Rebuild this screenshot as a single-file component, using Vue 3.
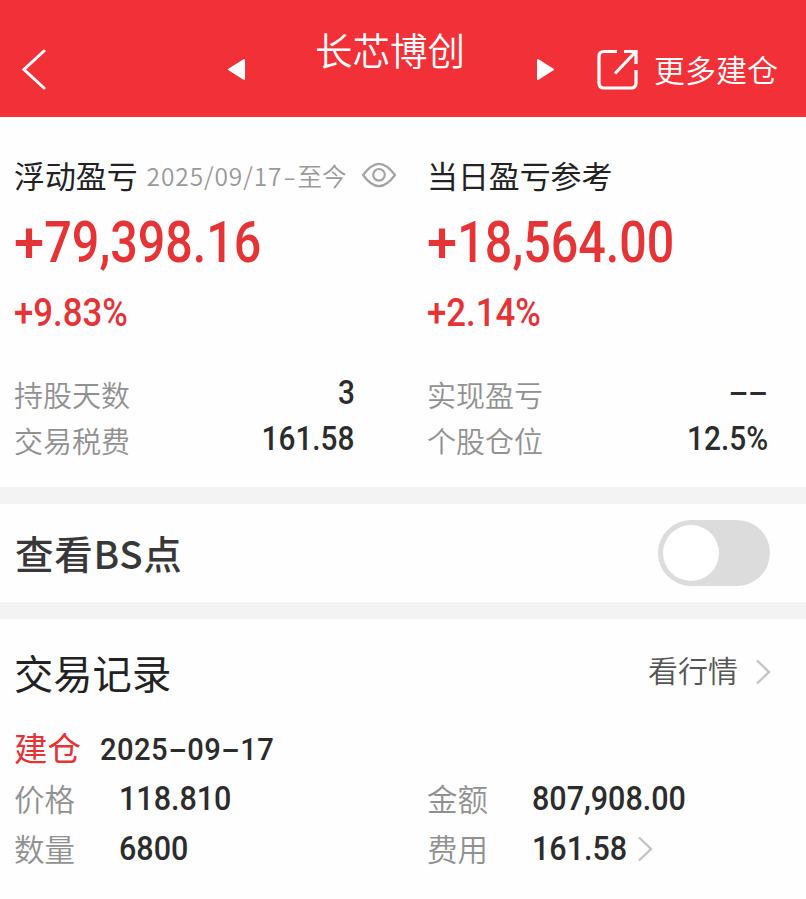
<template>
  <div class="page">
    <header class="header">
      <svg class="back" viewBox="0 0 26 42" width="26" height="42">
        <path d="M23 2 L3 20.5 L23 39" />
      </svg>
      <svg class="prev" viewBox="0 0 20 24" width="20" height="24">
        <path d="M2 11.5 L17 2 V21 Z" />
      </svg>
      <h1 class="title">{{ stockName }}</h1>
      <svg class="next" viewBox="0 0 20 24" width="20" height="24">
        <path d="M18 11.5 L3 2 V21 Z" />
      </svg>
      <a class="more">
        <svg viewBox="0 0 44 44" width="44" height="44">
          <path d="M22 3.5 H9 Q4 3.5 4 8.5 V35 Q4 40 9 40 H36 Q41 40 41 35 V22" />
          <path d="M29 3.5 H41 V16 M40.5 4 L20 25.5" />
        </svg>
        <span>更多建仓</span>
      </a>
    </header>

    <section class="summary">
      <div v-for="item in summary" :key="item.label" class="summary-col">
        <div class="summary-head">
          <span class="summary-label">{{ item.label }}</span>
          <span v-if="item.period" class="period"><b>{{ item.period }}</b><i>-</i>至今</span>
          <svg v-if="item.period" class="eye" viewBox="0 0 36 26" width="36" height="26">
            <path d="M2 13 C8 5 13 1.8 18 1.8 C23 1.8 28 5 34 13 C28 21 23 24.2 18 24.2 C13 24.2 8 21 2 13 Z" />
            <circle cx="18" cy="12.8" r="5.8" />
          </svg>
        </div>
        <div class="amount"><span><b>+</b>{{ item.amount }}</span></div>
        <div class="percent"><span>{{ item.percent }}</span></div>
        <div v-for="stat in item.stats" :key="stat.label" class="stat">
          <span class="stat-label">{{ stat.label }}</span>
          <span v-if="stat.value" class="num stat-value">{{ stat.value }}</span>
          <span v-else class="num stat-value empty"><i>-</i><i>-</i></span>
        </div>
      </div>
    </section>

    <section class="bs">
      <span class="bs-label">查看BS点</span>
      <button class="switch" :class="{ on: showBS }" @click="showBS = !showBS">
        <span class="knob"></span>
      </button>
    </section>

    <section class="records">
      <div class="records-head">
        <h2>交易记录</h2>
        <a class="quote">
          <span>看行情</span>
          <svg viewBox="0 0 16 26" width="16" height="26"><path d="M2 1.5 L14 13 L2 24.5" /></svg>
        </a>
      </div>
      <div class="record-open">
        <span class="tag">建仓</span>
        <span class="num date">2025<i>-</i>09<i>-</i>17</span>
      </div>
      <div class="record-grid">
        <div v-for="field in fields" :key="field.label" class="field">
          <span class="field-label">{{ field.label }}</span>
          <span class="num field-value">{{ field.value }}</span>
          <svg v-if="field.link" class="field-arrow" viewBox="0 0 16 26" width="16" height="26">
            <path d="M2 1.5 L14 13 L2 24.5" />
          </svg>
        </div>
      </div>
    </section>
  </div>
</template>

<script setup>
import { ref } from 'vue';

const stockName = '长芯博创';
const showBS = ref(false);

const summary = [
  {
    label: '浮动盈亏',
    period: '2025/09/17',
    amount: '79,398.16',
    percent: '+9.83%',
    stats: [
      { label: '持股天数', value: '3' },
      { label: '交易税费', value: '161.58' }
    ]
  },
  {
    label: '当日盈亏参考',
    amount: '18,564.00',
    percent: '+2.14%',
    stats: [
      { label: '实现盈亏', value: '' },
      { label: '个股仓位', value: '12.5%' }
    ]
  }
];

const fields = [
  { label: '价格', value: '118.810' },
  { label: '金额', value: '807,908.00' },
  { label: '数量', value: '6800' },
  { label: '费用', value: '161.58', link: true }
];
</script>

<style>
body {
  background: #fff;
}
</style>

<style scoped>
.page {
  width: 806px;
  height: 899px;
  overflow: hidden;
  background: #fefefe;
  font-family: "Noto Sans CJK SC", sans-serif;
  color: #222;
  white-space: nowrap;
}

svg {
  display: block;
  flex: none;
  fill: none;
}

i {
  display: inline-block;
  font-style: normal;
  text-align: center;
}

.header {
  display: flex;
  align-items: center;
  height: 117px;
  box-sizing: border-box;
  padding: 22px 0 0 21px;
  background: #f23038;
  color: #fff;
}

.back path {
  stroke: #fff;
  stroke-width: 3;
  stroke-linecap: round;
}

.prev {
  margin-left: 180px;
}

.prev path,
.next path {
  fill: #fff;
  stroke: #fff;
  stroke-width: 2;
  stroke-linejoin: round;
}

.title {
  width: 150px;
  margin: 0 0 42px 68px;
  font-size: 37.5px;
  font-weight: 350;
  line-height: 40px;
}

.next {
  margin-left: 70px;
}

.more {
  display: flex;
  align-items: center;
  margin-left: 40px;
  font-size: 31px;
  font-weight: 350;
  line-height: 44px;
}

.more path {
  stroke: #fff;
  stroke-width: 3.2;
}

.more span {
  margin: 0 0 2px 15px;
}

.summary {
  display: grid;
  grid-template-columns: 413px 1fr;
  height: 370px;
  box-sizing: border-box;
  padding: 32px 0 0 14px;
}

.summary-head {
  display: flex;
  align-items: center;
  height: 52px;
}

.summary-label {
  font-size: 30.9px;
  line-height: 50px;
}

.period {
  margin-left: 9px;
  font-size: 24.5px;
  font-weight: 350;
  color: #999;
}

.period b {
  font-weight: inherit;
  letter-spacing: 0.9px;
}

.period i {
  width: 15px;
  transform: scaleX(1.5);
}

.eye {
  margin-left: 15px;
}

.eye path,
.eye circle {
  stroke: #a3a3a3;
  stroke-width: 2.2;
}

/* narrow digits, close to a DIN face */
.num,
.amount span,
.percent span {
  display: inline-block;
  font-family: Roboto, "Noto Sans CJK SC", sans-serif;
  font-weight: 500;
  transform: scaleX(0.91);
  transform-origin: left center;
}

.amount {
  height: 80px;
  font-size: 57px;
  line-height: 72px;
  color: #e53336;
}

.amount span {
  transform: scaleX(0.85);
}

.amount b {
  display: inline-block;
  margin-right: 4px;
  font-weight: inherit;
  transform: scaleX(1.12);
  transform-origin: left center;
}

.percent {
  height: 62px;
  margin-bottom: 28px;
  font-size: 38px;
  line-height: 57px;
  color: #e53336;
}

.percent span {
  transform: scaleX(0.915);
}

.stat {
  display: flex;
  justify-content: space-between;
  width: 341px;
  height: 46px;
  line-height: 46px;
}

.stat-label {
  font-size: 29px;
  font-weight: 350;
  color: #919191;
}

.stat-value {
  font-size: 33.5px;
  line-height: 43px;
  color: #2c2c2c;
  transform: scaleX(0.89);
  transform-origin: right center;
}

.empty i {
  width: 22px;
  transform: scaleX(2);
}

.bs {
  display: flex;
  align-items: center;
  justify-content: space-between;
  height: 98px;
  padding: 0 36px 0 15px;
  border-top: 17px solid #f3f3f3;
  border-bottom: 17px solid #f3f3f3;
}

.bs-label {
  margin-bottom: 2px;
  font-size: 38.5px;
  font-weight: 500;
  line-height: 96px;
  letter-spacing: 0.7px;
  color: #383838;
}

.switch {
  width: 112px;
  height: 66px;
  padding: 5px;
  border: 0;
  border-radius: 33px;
  background: #dcdcdc;
}

.knob {
  display: block;
  width: 56px;
  height: 56px;
  border-radius: 50%;
  background: #fff;
}

.switch.on {
  background: #f23038;
}

.switch.on .knob {
  margin-left: 46px;
}

.records {
  padding: 0 0 0 14px;
}

.records-head {
  display: flex;
  align-items: center;
  justify-content: space-between;
  height: 106px;
  padding-right: 35px;
}

.records-head h2 {
  margin: 0;
  font-size: 39.3px;
  font-weight: 400;
  line-height: 106px;
}

.quote {
  display: flex;
  align-items: center;
  font-size: 30px;
  font-weight: 350;
  line-height: 40px;
  color: #555;
}

.quote span {
  margin: 0 17px 7px 0;
}

.quote path,
.field-arrow path {
  stroke: #c4c4c4;
  stroke-width: 2.4;
}

.record-open {
  display: flex;
  align-items: center;
  height: 49px;
}

.tag {
  margin-bottom: 6px;
  font-size: 33.5px;
  line-height: 43px;
  color: #e53336;
}

.date {
  margin: 0 0 2px 19px;
  font-size: 32px;
  letter-spacing: 0.5px;
  color: #2c2c2c;
}

.date i {
  width: 21px;
  letter-spacing: 0;
  transform: scaleX(1.9);
}

.record-grid {
  display: grid;
  grid-template-columns: 413px 1fr;
}

.field {
  display: flex;
  align-items: center;
  height: 50px;
}

.field-label {
  width: 105px;
  margin-bottom: 2px;
  font-size: 30.5px;
  font-weight: 350;
  line-height: 48px;
  color: #919191;
}

.field-value {
  margin-bottom: 1px;
  font-size: 33.5px;
  color: #2c2c2c;
}
</style>
